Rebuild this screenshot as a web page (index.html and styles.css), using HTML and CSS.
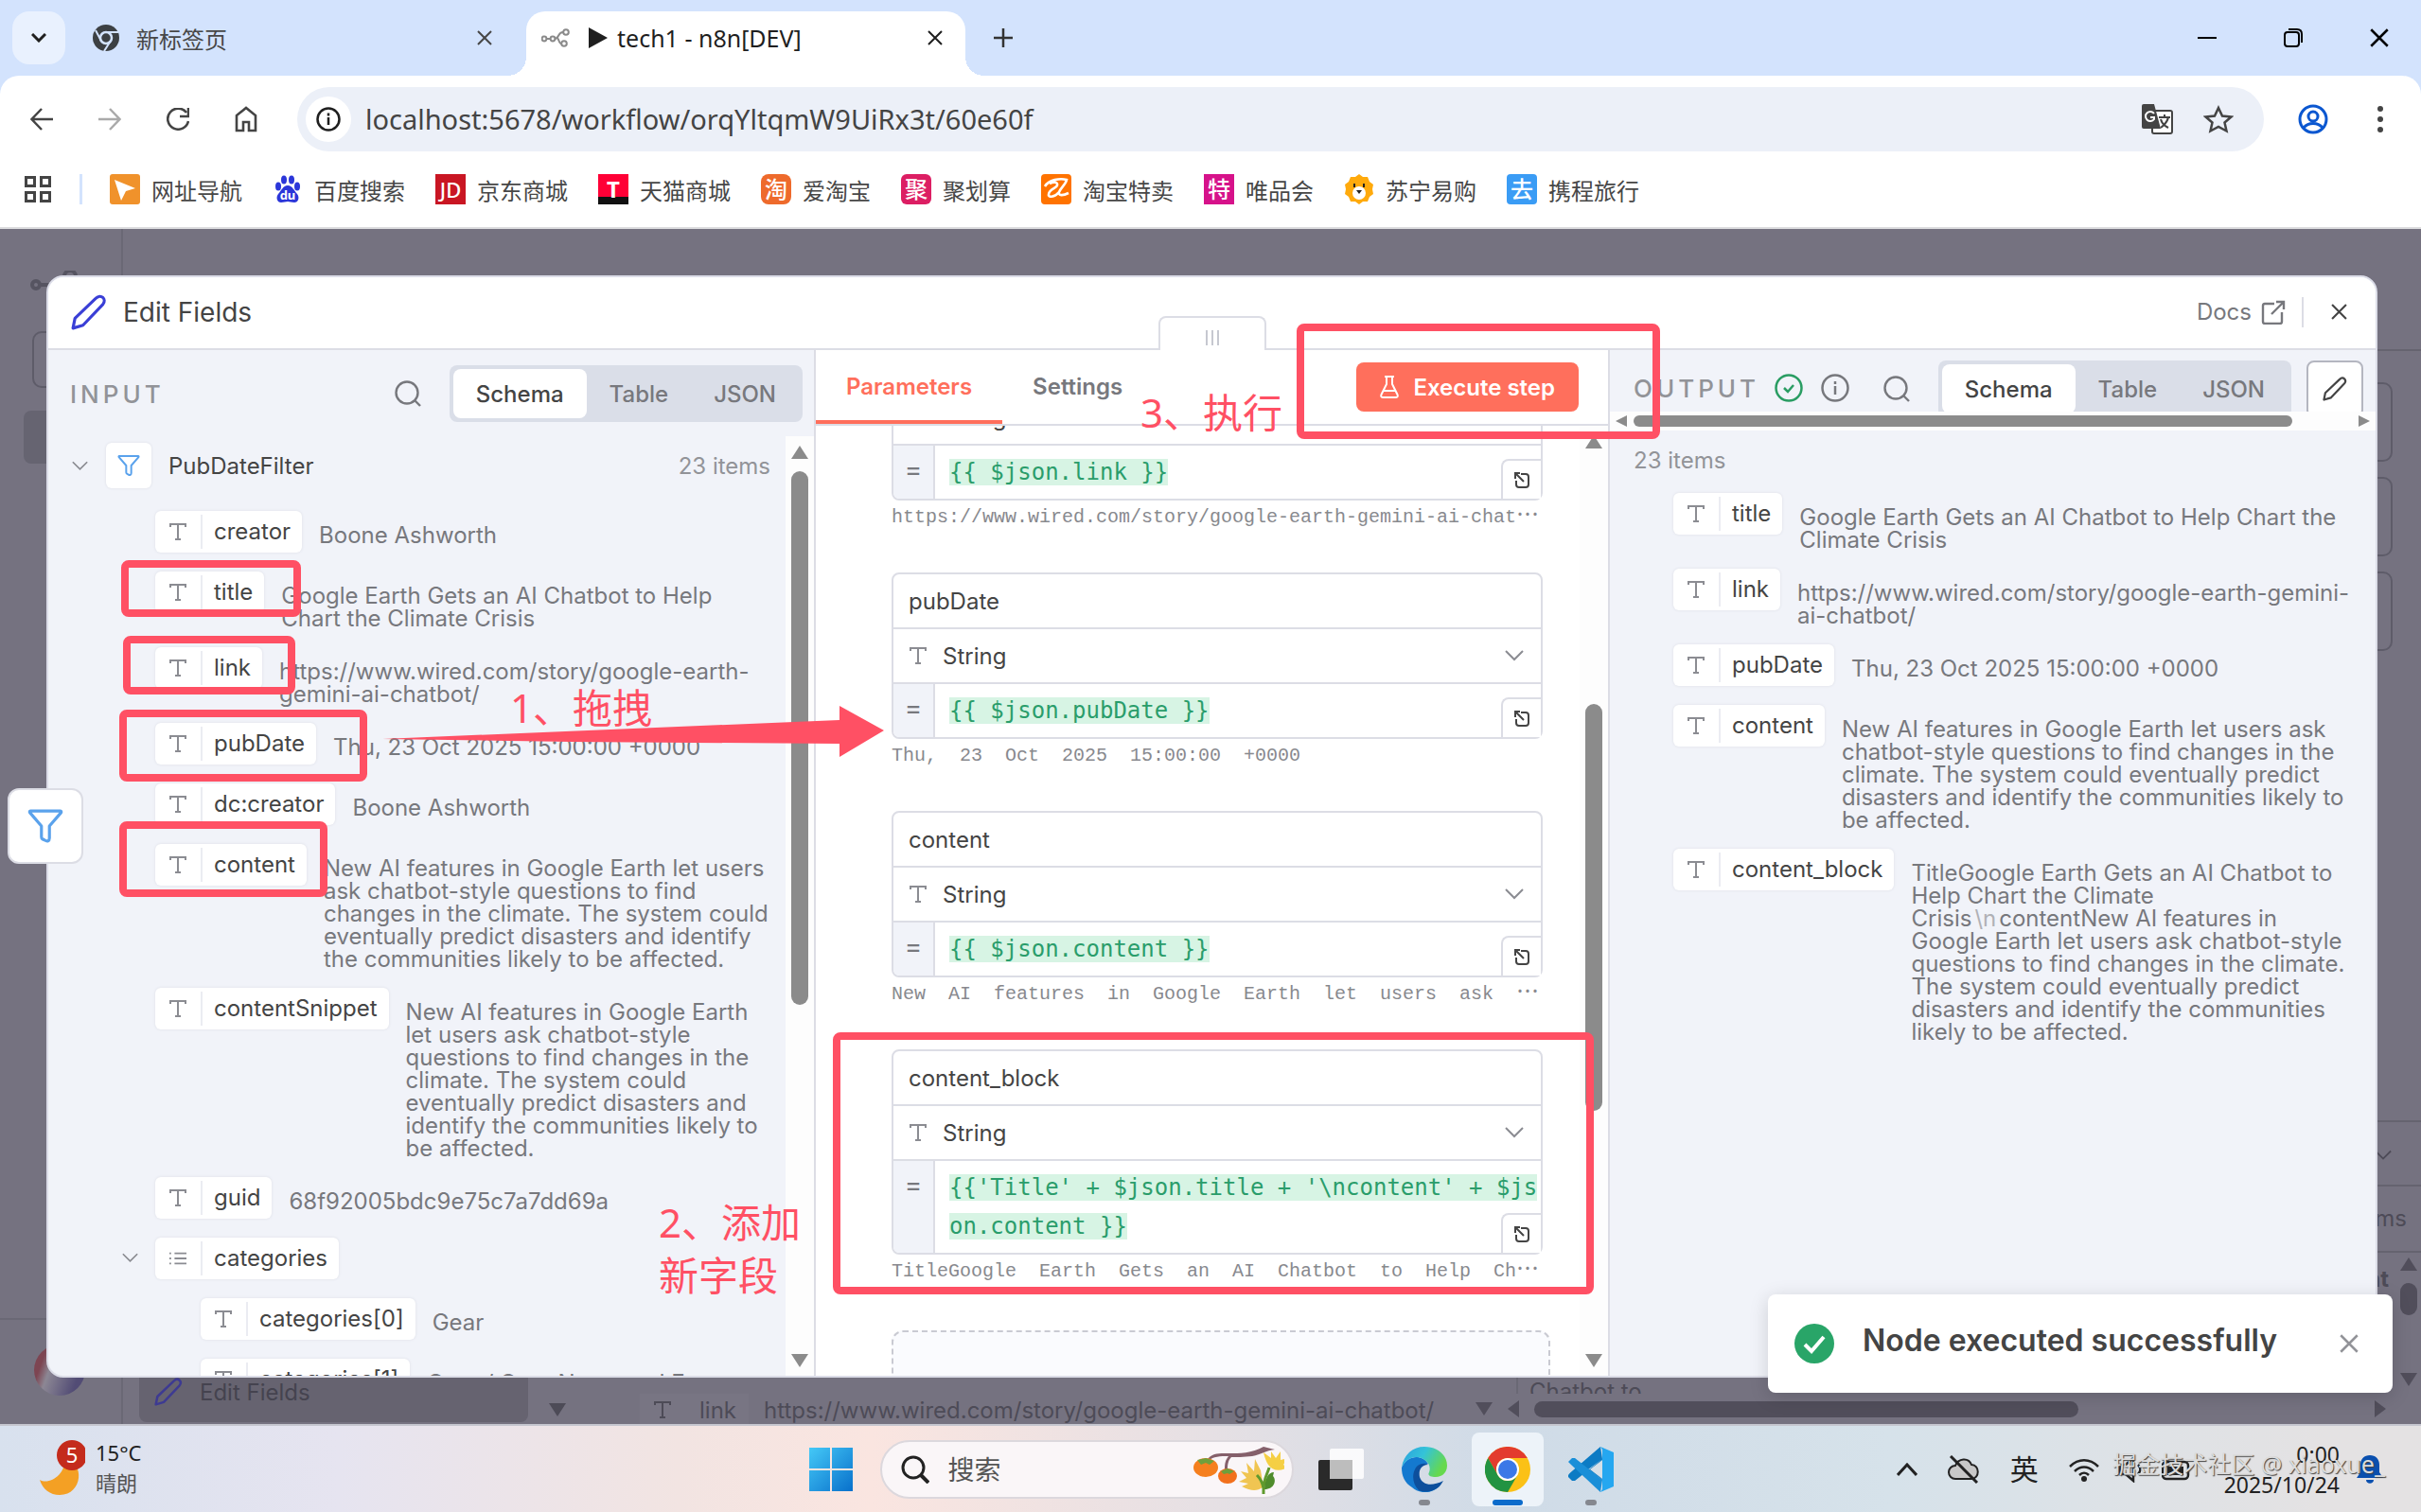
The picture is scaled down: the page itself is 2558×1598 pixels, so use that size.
FILE: index.html
```html
<!DOCTYPE html>
<html lang="zh-CN">
<head>
    <meta charset="UTF-8">
    <meta name="viewport" content="width=device-width, initial-scale=1.0">
    <title>tech1 - n8n[DEV]</title>
    <link rel="stylesheet" href="styles.css">
</head>
<body>
    <!-- shared icons -->
    <svg class="sprite" width="0" height="0" aria-hidden="true">
        <symbol id="i-x" viewBox="0 0 16 16"><path d="M1 1l14 14M15 1L1 15" fill="none" stroke="currentColor" stroke-width="2"/></symbol>
        <symbol id="i-down" viewBox="0 0 20 12"><path d="M1 1l9 9 9-9" fill="none" stroke="currentColor" stroke-width="2"/></symbol>
        <symbol id="i-chevron" viewBox="0 0 16 10"><path d="M1 1l7 7 7-7" fill="none" stroke="currentColor" stroke-width="3"/></symbol>
        <symbol id="i-type" viewBox="0 0 18 18"><path d="M1 4V1h16v3M9 1v16M6 17h6" fill="none" stroke="currentColor" stroke-width="2"/></symbol>
        <symbol id="i-list" viewBox="0 0 20 16"><path d="M6 2h14M6 8h14M6 14h14M0 2h2M0 8h2M0 14h2" fill="none" stroke="currentColor" stroke-width="2"/></symbol>
        <symbol id="i-search" viewBox="0 0 28 28"><circle cx="13" cy="13" r="11.5" fill="none" stroke="currentColor" stroke-width="2.4"/><path d="M21 21l6 6" stroke="currentColor" stroke-width="2.4"/></symbol>
        <symbol id="i-filter" viewBox="0 0 36 36"><path d="M3 3h30c1 0 1 1 .6 1.600L22 18v12c0 3-2 4-5 2l-2-1c-1-.5-1-1-1-2V18L2.500 4.600C2 4 2 3 3 3z" fill="none" stroke="currentColor" stroke-width="3" stroke-linejoin="round"/></symbol>
        <symbol id="i-pencil" viewBox="0 0 36 36"><path d="M2 34l2-10L25 4c5-5 11 1 7 6L12 31z" fill="none" stroke="currentColor" stroke-width="3" stroke-linejoin="round"/></symbol>
        <symbol id="i-open" viewBox="0 0 18 18"><path d="M8 3h5c2 0 3 1 3 3v8c0 2-1 3-3 3H6c-2 0-3-1-3-3v-4M2 8V2h5M2 2l9 9" fill="none" stroke="currentColor" stroke-width="2"/></symbol>
        <symbol id="i-external" viewBox="0 0 26 26"><path d="M14 4H4C2.500 4 2 5 2 6v17c0 1 1 2 2 2h16c1 0 2-1 2-2V13M16 2h8v8M24 2L11 15" fill="none" stroke="currentColor" stroke-width="2.400"/></symbol>
        <symbol id="i-chrome" viewBox="0 0 48 48"><circle cx="24" cy="24" r="24" fill="#fbc116"/><path d="M3.200 12A24 24 0 0 1 44.800 12H24a12 12 0 0 0-10.400 18z" fill="#e33b2e"/><path d="M3.200 12A24 24 0 0 0 24 48l10.400-18a12 12 0 0 1-20.800 0z" fill="#229342"/><circle cx="24" cy="24" r="12" fill="#fff"/><circle cx="24" cy="24" r="10" fill="#3b78e7"/></symbol>
    </svg>

    <!-- browser -->
    <header class="browser">
        <div class="tab-strip">
            <button class="tab-search" aria-label="Search tabs"><svg width="16" height="10"><use href="#i-chevron"/></svg></button>
            <div class="tab">
                <svg width="28" height="28" viewBox="0 0 28 28"><circle cx="14" cy="14" r="14" fill="#3c4043"/><circle cx="14" cy="14" r="6" fill="none" stroke="#d3e3fd" stroke-width="2.500"/><path d="M14 8h13M8.800 17L3 6M19 17l-7 11" stroke="#d3e3fd" stroke-width="2"/></svg>
                <span>新标签页</span>
                <button class="tab-close" aria-label="Close tab"><svg width="16" height="16"><use href="#i-x"/></svg></button>
            </div>
            <div class="tab tab-active">
                <svg width="30" height="20" viewBox="0 0 30 20"><g fill="none" stroke="#8a8a8a" stroke-width="2"><circle cx="3" cy="11" r="2.400"/><circle cx="12" cy="11" r="2.400"/><circle cx="26" cy="4" r="2.800"/><circle cx="24" cy="16" r="2.800"/><path d="M5 11h4M14 11c5 0 3-7 9-7M16 10c3 0 2 6 5 6"/></g></svg>
                <span class="tab-title"><svg width="20" height="22" viewBox="0 0 20 22"><path d="M0 0l20 11L0 22z" fill="#1f1f1f"/></svg>tech1 - n8n[DEV]</span>
                <button class="tab-close" aria-label="Close tab"><svg width="16" height="16"><use href="#i-x"/></svg></button>
            </div>
            <button class="tab-new" aria-label="New tab"><svg width="20" height="20" viewBox="0 0 20 20"><path d="M10 0v20M0 10h20" stroke="#333" stroke-width="2.500"/></svg></button>
            <div class="window-buttons">
                <button aria-label="Minimize"><svg width="20" height="20" viewBox="0 0 20 20"><path d="M0 10h20" stroke="#000" stroke-width="2"/></svg></button>
                <button aria-label="Restore"><svg width="20" height="20" viewBox="0 0 20 20"><g fill="none" stroke="#000" stroke-width="2"><rect x="1" y="4" width="15" height="15" rx="3"/><path d="M5 1h9c3 0 5 2 5 5v9"/></g></svg></button>
                <button aria-label="Close"><svg width="20" height="20"><use href="#i-x"/></svg></button>
            </div>
        </div>

        <div class="toolbar">
            <button aria-label="Back"><svg width="24" height="24" viewBox="0 0 24 24"><path d="M24 12H2M12 1L1.500 12 12 23" fill="none" stroke="#444" stroke-width="2.500"/></svg></button>
            <button aria-label="Forward"><svg width="24" height="24" viewBox="0 0 24 24"><path d="M0 12h22M12 1l10.500 11L12 23" fill="none" stroke="#aaa" stroke-width="2.500"/></svg></button>
            <button aria-label="Reload"><svg width="24" height="24" viewBox="0 0 24 24"><path d="M21 5a11 11 0 1 0 2 9M23 0v9h-9" fill="none" stroke="#444" stroke-width="2.600"/></svg></button>
            <button aria-label="Home"><svg width="24" height="28" viewBox="0 0 24 28"><path d="M2 26V10l10-8 10 8v16h-7v-9H9v9z" fill="none" stroke="#444" stroke-width="2.600"/></svg></button>
            <div class="omnibox">
                <button class="site-info" aria-label="Site information"><svg width="26" height="26" viewBox="0 0 26 26"><circle cx="13" cy="13" r="11.500" fill="none" stroke="#1f1f1f" stroke-width="2.500"/><path d="M13 11v8M13 6.500v3" stroke="#1f1f1f" stroke-width="2.500"/></svg></button>
                <input class="url" type="text" aria-label="Address" value="localhost:5678/workflow/orqYltqmW9UiRx3t/60e60f">
                <button aria-label="Translate"><svg width="34" height="34" viewBox="0 0 34 34"><rect x="12" y="8" width="21" height="24" rx="2" fill="#fff" stroke="#444" stroke-width="2"/><path d="M3 1h11l7 26H3a2 2 0 0 1-2-2V3a2 2 0 0 1 2-2z" fill="#444"/><path d="M14 11a5 5 0 1 0 0 6v-2h-4" fill="none" stroke="#fff" stroke-width="2"/><path d="M19 15h12M25 12v3M29 15c-1 5-4 8-8 11M21 17c1 4 4 7 8 9" fill="none" stroke="#444" stroke-width="2"/></svg></button>
                <button aria-label="Bookmark"><svg width="32" height="30" viewBox="0 0 32 30"><path d="M16 3l4 8.500 9.500 1-7 6 2 9L16 23l-8.500 4.500 2-9-7-6 9.500-1z" fill="none" stroke="#444" stroke-width="2.500"/></svg></button>
            </div>
            <button class="profile" aria-label="Profile"><svg width="32" height="32" viewBox="0 0 32 32"><g fill="none" stroke="#0b57d0" stroke-width="3"><circle cx="16" cy="16" r="14"/><circle cx="16" cy="13" r="5"/><path d="M6 25c5-6 15-6 20 0"/></g></svg></button>
            <button aria-label="Menu"><svg width="6" height="28" viewBox="0 0 6 28"><circle cx="3" cy="3" r="3" fill="#444"/><circle cx="3" cy="14" r="3" fill="#444"/><circle cx="3" cy="25" r="3" fill="#444"/></svg></button>
        </div>

        <nav class="bookmarks">
            <button class="apps" aria-label="Apps"><svg width="28" height="28" viewBox="0 0 28 28"><g fill="none" stroke="#444" stroke-width="3"><rect x="1.500" y="1.500" width="9" height="9"/><rect x="17.500" y="1.500" width="9" height="9"/><rect x="1.500" y="17.500" width="9" height="9"/><rect x="17.500" y="17.500" width="9" height="9"/></g></svg></button>
            <a href="#"><svg width="32" height="32" viewBox="0 0 32 32"><rect width="32" height="32" rx="3" fill="#f0922b"/><path d="M5 6l22 9-10 3-5 10z" fill="#fff"/></svg>网址导航</a>
            <a href="#"><svg width="32" height="32" viewBox="0 0 32 32"><g fill="#2b36d9"><ellipse cx="6" cy="13" rx="3" ry="4.500"/><ellipse cx="12" cy="6" rx="3" ry="4.500"/><ellipse cx="20" cy="6" rx="3" ry="4.500"/><ellipse cx="26" cy="13" rx="3" ry="4.500"/><path d="M16 12c5 0 7 6 10 9 3 4 1 9-3 9-3 0-5-1-7-1s-4 1-7 1c-4 0-6-5-3-9 3-3 5-9 10-9z"/></g><text x="16" y="27" class="logo-du" text-anchor="middle">du</text></svg>百度搜索</a>
            <a href="#"><span class="logo logo-jd">JD</span>京东商城</a>
            <a href="#"><span class="logo logo-tmall">T</span>天猫商城</a>
            <a href="#"><span class="logo logo-tao">淘</span>爱淘宝</a>
            <a href="#"><span class="logo logo-ju">聚</span>聚划算</a>
            <a href="#"><svg width="32" height="32" viewBox="0 0 32 32"><rect width="32" height="32" rx="4" fill="#ff7300"/><path d="M4 13C8 6 20 4 27 6c-1 5-6 8-8 13-1 4 4 4 10 1M9 10c4-2 9-2 8 2-1 3-8 4-9 9-1 4 6 4 11-2" fill="none" stroke="#fff" stroke-width="2.600"/></svg>淘宝特卖</a>
            <a href="#"><span class="logo logo-vip">特</span>唯品会</a>
            <a href="#"><svg width="32" height="32" viewBox="0 0 32 32"><path d="M16 0l4 3 5 0 2 5 4 3-1 5 1 5-4 3-2 5h-5l-4 3-4-3H7l-2-5-4-3 1-5-1-5 4-3 2-5h5z" fill="#ffaa0c"/><circle cx="16" cy="20" r="7" fill="#fff"/><path d="M13 17h6l-3 4zM10 10h2v4h-2zM20 10h2v4h-2z" fill="#222"/></svg>苏宁易购</a>
            <a href="#"><span class="logo logo-ctrip">去</span>携程旅行</a>
        </nav>
    </header>

    <main class="page">
        <!-- dimmed workflow editor behind the dialog -->
        <div class="backdrop" aria-hidden="true">
            <div class="bd-sidebar"></div>
            <svg class="bd-logo" width="50" height="26" viewBox="0 0 50 26"><g fill="none" stroke="#565461" stroke-width="4"><circle cx="6" cy="15" r="4"/><path d="M10 15h10M36 6a6 6 0 0 1 12 0"/></g></svg>
            <div class="bd-box"></div>
            <div class="bd-block"></div>
            <div class="bd-user"></div>
            <div class="bd-avatar"></div>
            <div class="bd-node"><svg width="30" height="30"><use href="#i-pencil"/></svg>Edit Fields</div>
            <div class="bd-row">
                <span class="bd-tri"></span>
                <span class="bd-pill"><svg width="18" height="18"><use href="#i-type"/></svg>link</span>
                <span>https://www.wired.com/story/google-earth-gemini-ai-chatbot/</span>
            </div>
            <div class="bd-cell">Chatbot to</div>
            <div class="bd-scroll"><i class="tri tri-down"></i><i class="tri tri-left"></i><b></b><i class="tri tri-right"></i></div>
            <div class="bd-right">
                <div class="bd-card"></div><div class="bd-card"></div><div class="bd-card"></div>
            </div>
            <div class="bd-logs"><div class="bd-log-head"><svg width="18" height="12"><use href="#i-down"/></svg></div><div class="bd-items">ms</div><div class="bd-head">nt</div></div>
            <div class="bd-vscroll"><i class="tri tri-up"></i><b></b><i class="tri tri-down"></i></div>
        </div>

        <section class="dialog">
            <div class="dialog-header">
                <svg class="node-icon" width="38" height="38"><use href="#i-pencil"/></svg>
                <h1>Edit Fields</h1>
                <a class="docs" href="#">Docs <svg width="26" height="26"><use href="#i-external"/></svg></a>
                <button class="dialog-close" aria-label="Close"><svg width="17" height="17"><use href="#i-x"/></svg></button>
                <div class="drag-handle"><i></i><i></i><i></i></div>
            </div>

            <div class="panels">
                <div class="panel panel-input">
                    <div class="panel-head">
                        <h2>INPUT</h2>
                        <button class="icon-button" aria-label="Search"><svg width="28" height="28"><use href="#i-search"/></svg></button>
                        <div class="switch"><button class="on">Schema</button><button>Table</button><button>JSON</button></div>
                    </div>
                    <div class="panel-scroll">
                        <div class="schema">
                            <div class="schema-node">
                                <svg class="arrow" width="17" height="11"><use href="#i-down"/></svg>
                                <span class="node-box"><svg width="24" height="24"><use href="#i-filter"/></svg></span>
                                <span>PubDateFilter</span>
                                <span class="count">23 items</span>
                            </div>
                            <div class="field"><span class="pill"><svg width="18" height="18"><use href="#i-type"/></svg><span>creator</span></span><span class="value">Boone Ashworth</span></div>
                            <div class="field"><span class="pill"><svg width="18" height="18"><use href="#i-type"/></svg><span>title</span></span><span class="value">Google Earth Gets an AI Chatbot to Help Chart the Climate Crisis</span></div>
                            <div class="field"><span class="pill"><svg width="18" height="18"><use href="#i-type"/></svg><span>link</span></span><span class="value">https://www.wired.com/story/google-earth-gemini-ai-chatbot/</span></div>
                            <div class="field"><span class="pill"><svg width="18" height="18"><use href="#i-type"/></svg><span>pubDate</span></span><span class="value">Thu, 23 Oct 2025 15:00:00 +0000</span></div>
                            <div class="field"><span class="pill"><svg width="18" height="18"><use href="#i-type"/></svg><span>dc:creator</span></span><span class="value">Boone Ashworth</span></div>
                            <div class="field"><span class="pill"><svg width="18" height="18"><use href="#i-type"/></svg><span>content</span></span><span class="value">New AI features in Google Earth let users ask chatbot-style questions to find changes in the climate. The system could eventually predict disasters and identify the communities likely to be affected.</span></div>
                            <div class="field"><span class="pill"><svg width="18" height="18"><use href="#i-type"/></svg><span>contentSnippet</span></span><span class="value">New AI features in Google Earth let users ask chatbot-style questions to find changes in the climate. The system could eventually predict disasters and identify the communities likely to be affected.</span></div>
                            <div class="field"><span class="pill"><svg width="18" height="18"><use href="#i-type"/></svg><span>guid</span></span><span class="value">68f92005bdc9e75c7a7dd69a</span></div>
                            <div class="field field-parent"><svg class="arrow" width="17" height="11"><use href="#i-down"/></svg><span class="pill"><svg width="18" height="16"><use href="#i-list"/></svg><span>categories</span></span></div>
                            <div class="field field-child"><span class="pill"><svg width="18" height="18"><use href="#i-type"/></svg><span>categories[0]</span></span><span class="value">Gear</span></div>
                            <div class="field field-child"><span class="pill"><svg width="18" height="18"><use href="#i-type"/></svg><span>categories[1]</span></span><span class="value">Gear / Gear News and Events</span></div>
                        </div>
                        <div class="scrollbar scrollbar-input"><i class="tri tri-up"></i><b></b><i class="tri tri-down"></i></div>
                    </div>
                </div>

                <div class="panel panel-params">
                    <div class="param-tabs">
                        <button class="on">Parameters</button>
                        <button>Settings</button>
                        <button class="execute"><svg width="20" height="24" viewBox="0 0 20 24"><path d="M5 1h10M7 1v8L1.500 20c-.8 2 0 3 2 3h13c2 0 2.800-1 2-3L13 9V1M4 16h12" fill="none" stroke="#fff" stroke-width="2"/></svg>Execute step</button>
                    </div>
                    <div class="panel-scroll">
                        <div class="params">
                            <div class="param">
                                <div class="param-box">
                                    <input type="text" aria-label="Name" value="link">
                                    <div class="param-type"><svg width="18" height="18"><use href="#i-type"/></svg><select aria-label="Type"><option>String</option></select><svg width="20" height="12"><use href="#i-down"/></svg></div>
                                    <div class="expression"><span class="eq">=</span><code><mark>{{ $json.link }}</mark></code><button class="expand" aria-label="Open editor"><svg width="18" height="20"><use href="#i-open"/></svg></button></div>
                                </div>
                                <div class="result">https://www.wired.com/story/google-earth-gemini-ai-chat<em>…</em></div>
                            </div>
                            <div class="param">
                                <div class="param-box">
                                    <input type="text" aria-label="Name" value="pubDate">
                                    <div class="param-type"><svg width="18" height="18"><use href="#i-type"/></svg><select aria-label="Type"><option>String</option></select><svg width="20" height="12"><use href="#i-down"/></svg></div>
                                    <div class="expression"><span class="eq">=</span><code><mark>{{ $json.pubDate }}</mark></code><button class="expand" aria-label="Open editor"><svg width="18" height="20"><use href="#i-open"/></svg></button></div>
                                </div>
                                <div class="result">Thu,  23  Oct  2025  15:00:00  +0000</div>
                            </div>
                            <div class="param">
                                <div class="param-box">
                                    <input type="text" aria-label="Name" value="content">
                                    <div class="param-type"><svg width="18" height="18"><use href="#i-type"/></svg><select aria-label="Type"><option>String</option></select><svg width="20" height="12"><use href="#i-down"/></svg></div>
                                    <div class="expression"><span class="eq">=</span><code><mark>{{ $json.content }}</mark></code><button class="expand" aria-label="Open editor"><svg width="18" height="20"><use href="#i-open"/></svg></button></div>
                                </div>
                                <div class="result">New  AI  features  in  Google  Earth  let  users  ask  <em>…</em></div>
                            </div>
                            <div class="param">
                                <div class="param-box">
                                    <input type="text" aria-label="Name" value="content_block">
                                    <div class="param-type"><svg width="18" height="18"><use href="#i-type"/></svg><select aria-label="Type"><option>String</option></select><svg width="20" height="12"><use href="#i-down"/></svg></div>
                                    <div class="expression"><span class="eq">=</span><code><mark>{{'Title' + $json.title + '\ncontent' + $json.content }}</mark></code><button class="expand" aria-label="Open editor"><svg width="18" height="20"><use href="#i-open"/></svg></button></div>
                                </div>
                                <div class="result">TitleGoogle  Earth  Gets  an  AI  Chatbot  to  Help  Ch<em>…</em></div>
                            </div>
                            <div class="drop-area">Drag input fields here or <a href="#">Add Field</a></div>
                        </div>
                        <div class="scrollbar scrollbar-params"><i class="tri tri-up"></i><b></b><i class="tri tri-down"></i></div>
                    </div>
                </div>

                <div class="panel panel-output">
                    <div class="panel-head">
                        <h2>OUTPUT</h2>
                        <svg width="30" height="30" viewBox="0 0 30 30"><g fill="none" stroke="#2a9d63" stroke-width="2.500"><circle cx="15" cy="15" r="13.500"/><path d="M10 15l4 4 6-7"/></g></svg>
                        <svg width="30" height="30" viewBox="0 0 30 30"><g fill="none" stroke="#77787d" stroke-width="2.500"><circle cx="15" cy="15" r="13.500"/><path d="M15 13v9M15 8v3"/></g></svg>
                        <button class="icon-button" aria-label="Search"><svg width="28" height="28"><use href="#i-search"/></svg></button>
                        <div class="switch"><button class="on">Schema</button><button>Table</button><button>JSON</button></div>
                        <button class="edit-button" aria-label="Edit output"><svg width="26" height="26"><use href="#i-pencil"/></svg></button>
                    </div>
                    <div class="hscroll"><i class="tri tri-left"></i><b></b><i class="tri tri-right"></i></div>
                    <div class="output-count">23 items</div>
                    <div class="schema schema-output">
                        <div class="field"><span class="pill"><svg width="18" height="18"><use href="#i-type"/></svg><span>title</span></span><span class="value">Google Earth Gets an AI Chatbot to Help Chart the Climate Crisis</span></div>
                        <div class="field"><span class="pill"><svg width="18" height="18"><use href="#i-type"/></svg><span>link</span></span><span class="value">https://www.wired.com/story/google-earth-gemini-ai-chatbot/</span></div>
                        <div class="field"><span class="pill"><svg width="18" height="18"><use href="#i-type"/></svg><span>pubDate</span></span><span class="value">Thu, 23 Oct 2025 15:00:00 +0000</span></div>
                        <div class="field"><span class="pill"><svg width="18" height="18"><use href="#i-type"/></svg><span>content</span></span><span class="value">New AI features in Google Earth let users ask chatbot-style questions to find changes in the climate. The system could eventually predict disasters and identify the communities likely to be affected.</span></div>
                        <div class="field"><span class="pill"><svg width="18" height="18"><use href="#i-type"/></svg><span>content_block</span></span><span class="value">TitleGoogle Earth Gets an AI Chatbot to Help Chart the Climate Crisis<span class="newline">\n</span>contentNew AI features in Google Earth let users ask chatbot-style questions to find changes in the climate. The system could eventually predict disasters and identify the communities likely to be affected.</span></div>
                    </div>
                </div>
            </div>
        </section>

        <button class="float-node" aria-label="PubDateFilter"><svg width="38" height="38"><use href="#i-filter"/></svg></button>

        <div class="toast" role="alert">
            <svg width="42" height="42" viewBox="0 0 42 42"><circle cx="21" cy="21" r="21" fill="#29a568"/><path d="M11 22l7 7 13-15" fill="none" stroke="#fff" stroke-width="4"/></svg>
            <strong>Node executed successfully</strong>
            <button aria-label="Close"><svg width="20" height="20"><use href="#i-x"/></svg></button>
        </div>
    </main>

    <footer class="taskbar">
        <div class="weather">
            <svg width="48" height="60" viewBox="0 0 48 60"><path d="M0 43c10 6 28-6 26-22 22 2 20 38-5 38-10 0-18-6-21-16z" fill="#f4a024"/><circle cx="34" cy="17" r="16" fill="#c42b1c"/><text x="34" y="25" class="badge-text" text-anchor="middle">5</text></svg>
            <div>15°C<br><span>晴朗</span></div>
        </div>
        <div class="task-center">
            <button aria-label="Start"><svg width="46" height="46" viewBox="0 0 46 46"><defs><linearGradient id="win" x1="0" y1="0" x2="1" y2="1"><stop offset="0" stop-color="#45c9f7"/><stop offset="1" stop-color="#0870cb"/></linearGradient></defs><path d="M0 0h22v22H0zM24 0h22v22H24zM0 24h22v22H0zM24 24h22v22H24z" fill="url(#win)"/></svg></button>
            <label class="task-search">
                <svg width="30" height="30" viewBox="0 0 30 30"><circle cx="13" cy="13" r="11" fill="none" stroke="#222" stroke-width="3"/><path d="M21 21l8 8" stroke="#222" stroke-width="4"/></svg>
                <input type="text" aria-label="搜索" placeholder="搜索">
                <svg width="96" height="54" viewBox="0 0 96 54"><path d="M14 17C20 9 28 10 38 10s24 0 36-7l12 3c-10 1-14 5-24 7-8 1-18 1-22 1-3 3-4 7-4 13h-3c0-7 1-10 4-14-9 0-16 0-21 5z" fill="#85606b"/><ellipse cx="13" cy="25" rx="13" ry="10" fill="#f57f1e"/><ellipse cx="36" cy="34" rx="10" ry="8" fill="#f2701c"/><path d="M4 17l9-2 9 3-5 4-4-2-5 2zM29 29l7-3 7 3-5 3-2-1-4 1z" fill="#6f9f3c"/><path d="M48 40l8-4-6-7 8 2-2-11 8 9 1-13 6 12 2 12c4-4 6-2 10 0-6 2-8 4-10 6-6 4-12 4-22-1l7-3z" fill="#f0c552"/><path d="M74 9l8 6V8l5 7 5-7v9l8-2-5 7 4 3c-8 5-16 3-20-3-2-3-4-8-5-13z" fill="#f5cf45"/><path d="M80 25c-2 8-7 12-6 28M67 33c4 4 6 8 7 14" fill="none" stroke="#5f9a2e" stroke-width="3"/><path d="M75 48c1-12 4-18 10-18l-1 4c4 4 2 14-9 14z" fill="#4f8c2c"/></svg>
            </label>
            <button class="app" aria-label="Task view"><svg width="48" height="46" viewBox="0 0 48 46"><rect x="0" y="13" width="36" height="32" rx="2" fill="#2a2a2a"/><rect x="12" y="1" width="36" height="32" rx="2" fill="#fff" opacity=".85"/><path d="M12 13h24v20H12z" fill="#bdbdbd"/></svg></button>
            <button class="app running" aria-label="Edge"><svg width="48" height="48" viewBox="0 0 48 48"><defs><linearGradient id="edge" x1="0" y1="0" x2="1" y2=".4"><stop offset="0" stop-color="#2a9fe0"/><stop offset=".5" stop-color="#34c3d8"/><stop offset="1" stop-color="#66d94e"/></linearGradient></defs><path d="M0 22C6 8 22 8 28 18c-9 0-12 7-10 14 3 9 14 14 24 7-8 12-24 11-31 4C3 38 0 31 0 22z" fill="#1479cf"/><path d="M15 22c4-5 10-5 13-3-9 0-10 8-9 13 3 9 13 10 25 4-5 10-16 14-26 10-6-6-8-16-3-24z" fill="#0d4f9c"/><path d="M0 22C2 8 12 0 24 0c14 0 24 9 24 20 0 8-6 12-12 12-6 0-9-2-7-5 3-8-4-16-14-16C8 11 3 16 0 22z" fill="url(#edge)"/></svg></button>
            <button class="app running current" aria-label="Chrome"><svg width="48" height="48"><use href="#i-chrome"/></svg></button>
            <button class="app running" aria-label="Visual Studio Code"><svg width="48" height="48" viewBox="0 0 48 48"><path d="M36 13v22L21 24zM34 0L5 25c-2 2-4 3-5 5v2l4 4h3l29-23z" fill="#0c7bc4"/><path d="M0 16l4-4h3l29 23-2 13L3 19z" fill="#1a8fd8"/><path d="M34 0l14 6v36l-14 6 2-3V3z" fill="#25a7f0"/><path d="M36 14v20L23 24z" fill="#d6e0e8"/></svg></button>
        </div>
        <div class="tray">
            <svg width="22" height="14" viewBox="0 0 22 14"><path d="M1 13L11 2l10 11" fill="none" stroke="#222" stroke-width="3"/></svg>
            <svg width="34" height="30" viewBox="0 0 34 30"><path d="M8 25a7 7 0 0 1 0-14C11 3 22 2 25 10c9 0 9 15 0 15z" fill="#c8c8c8" stroke="#222" stroke-width="2"/><path d="M3 1l28 28" stroke="#222" stroke-width="3"/></svg>
            <span class="ime">英</span>
            <svg width="32" height="26" viewBox="0 0 32 26"><g fill="none" stroke="#222" stroke-width="2.500"><path d="M1 10c9-9 21-9 30 0M6 15c6-6 14-6 20 0M11 19c3-3 7-3 10 0"/></g><circle cx="16" cy="23" r="3" fill="#222"/></svg>
            <svg width="32" height="28" viewBox="0 0 32 28"><path d="M2 9h6l8-7v24l-8-7H2zM21 9c3 3 3 7 0 10" fill="none" stroke="#222" stroke-width="2.500"/></svg>
            <svg width="32" height="26" viewBox="0 0 32 26"><rect x="1" y="5" width="27" height="18" rx="4" fill="none" stroke="#222" stroke-width="2.500"/><path d="M6 10h17v9H6z" fill="#222"/></svg>
            <time>0:00<br>2025/10/24</time>
            <svg width="28" height="32" viewBox="0 0 28 32"><path d="M14 1c6 0 10 4 10 10v8l4 6H0l4-6v-8C4 5 8 1 14 1zM10 27h8c0 5-8 5-8 0z" fill="#0a4fae"/></svg>
            <span class="watermark">掘金技术社区 @ xiaoxue_</span>
        </div>
    </footer>

    <!-- tutorial marks drawn over the window -->
    <div class="marks">
        <div class="mark mark-title"></div>
        <div class="mark mark-link"></div>
        <div class="mark mark-date"></div>
        <div class="mark mark-content"></div>
        <div class="mark mark-block"></div>
        <div class="mark mark-execute"></div>
        <svg class="mark-arrow" width="530" height="56" viewBox="0 0 530 56"><path d="M0 35L483 15V0l47 26-47 28V40L200 38z" fill="#ff5064"/></svg>
        <p class="note note-1">1、拖拽</p>
        <p class="note note-2">2、添加<br>新字段</p>
        <p class="note note-3">3、执行</p>
    </div>
</body>
</html>
```
FILE: styles.css
```css
* {
    box-sizing: border-box;
}

body {
    margin: 0;
    height: 100vh;
    display: flex;
    flex-direction: column;
    position: relative;
    overflow: hidden;
    font-family: Inter, "Noto Sans CJK SC", sans-serif;
    font-size: 24px;
    color: #444;
}

button, input, select {
    font: inherit;
    color: inherit;
    border: none;
    background: none;
    padding: 0;
    margin: 0;
}

button {
    display: flex;
    align-items: center;
    justify-content: center;
}

input, select {
    outline: none;
    appearance: none;
    min-width: 0;
}

a {
    color: inherit;
    text-decoration: none;
}

svg {
    flex: none;
}

h1, h2, p {
    margin: 0;
    font-weight: 400;
}

.sprite {
    position: absolute;
}

/* browser */
.browser {
    flex: none;
    font-family: "Noto Sans", "Noto Sans CJK SC", sans-serif;
    background: #d3e3fd;
    border-bottom: 2px solid #dcdcde;
}

.tab-strip {
    height: 80px;
    display: flex;
    padding: 12px 34px 0 13px;
}

.tab-search {
    width: 56px;
    height: 56px;
    border-radius: 18px;
    background: #e9f1fe;
    color: #1f1f1f;
    margin-right: 11px;
}

.tab {
    flex: 0 1 476px;
    display: flex;
    align-items: center;
    gap: 18px;
    padding: 0 36px 12px 18px;
    color: #474747;
}

.tab-active {
    position: relative;
    flex-basis: 464px;
    gap: 20px;
    padding: 0 24px 12px 16px;
    background: #fff;
    border-radius: 20px 20px 0 0;
    color: #1f1f1f;
}

.tab-active::before,
.tab-active::after {
    content: "";
    position: absolute;
    bottom: 0;
    width: 20px;
    height: 20px;
}

.tab-active::before {
    right: 100%;
    background: radial-gradient(circle at 0 0, transparent 20px, #fff 20px);
}

.tab-active::after {
    left: 100%;
    background: radial-gradient(circle at 100% 0, transparent 20px, #fff 20px);
}

.tab-title {
    display: flex;
    align-items: center;
    gap: 10px;
    font-size: 25px;
}

.tab-close {
    margin-left: auto;
}

.tab-new {
    margin-left: 30px;
    padding-bottom: 12px;
}

.window-buttons {
    margin-left: auto;
    display: flex;
    gap: 71px;
    padding-bottom: 12px;
    color: #000;
}

.toolbar {
    display: flex;
    align-items: center;
    gap: 48px;
    height: 80px;
    padding: 12px 40px 0 32px;
    background: #fff;
    border-radius: 20px 20px 0 0;
}

.omnibox {
    flex: 1;
    height: 68px;
    display: flex;
    align-items: center;
    gap: 32px;
    margin: 0 -12px 0 -6px;
    padding: 0 32px 0 9px;
    border-radius: 34px;
    background: #ecf0f8;
}

.site-info {
    width: 48px;
    height: 48px;
    border-radius: 50%;
    background: #fff;
}

.url {
    flex: 1;
    margin-left: -17px;
    padding-bottom: 2px;
    font-size: 29px;
}

.profile {
    margin-right: 4px;
}

.bookmarks {
    display: flex;
    align-items: center;
    gap: 32px;
    height: 80px;
    padding: 0 26px;
    background: #fff;
    color: #474747;
}

.bookmarks a {
    display: flex;
    align-items: center;
    gap: 12px;
}

.apps {
    height: 32px;
    padding-right: 30px;
    border-right: 3px solid #d3e3fd;
    margin-right: -3px;
}

.logo {
    width: 32px;
    height: 32px;
    display: flex;
    align-items: center;
    justify-content: center;
    color: #fff;
    font-size: 24px;
    font-weight: 500;
    line-height: 32px;
}

.logo-jd { background: #c91623; font-size: 22px; }
.logo-tmall { background: linear-gradient(#ff0036 75%, #111 75%); font-weight: 700; }
.logo-tao { background: #ee6a2c; border-radius: 8px; }
.logo-ju { background: #dc1e63; border-radius: 6px; }
.logo-vip { background: #d6128a; }
.logo-ctrip { background: #3a9cf5; border-radius: 4px; }

.logo-du {
    font-size: 13px;
    font-weight: 700;
    fill: #fff;
}

/* workflow page */
.page {
    flex: 1;
    min-height: 0;
    position: relative;
    display: flex;
    padding: 49px 46px 49px 49px;
    background: #757280;
}

.backdrop {
    position: absolute;
    inset: 0;
    overflow: hidden;
    color: #4d4b57;
}

.backdrop > * {
    position: absolute;
}

.bd-sidebar {
    left: 0;
    top: 0;
    bottom: 0;
    width: 130px;
    border-right: 2px solid #6a6875;
}

.bd-logo { left: 32px; top: 44px; }

.bd-box {
    left: 34px;
    top: 108px;
    width: 60px;
    height: 60px;
    border: 2px solid #5e5c69;
    border-radius: 10px;
}

.bd-block {
    left: 25px;
    top: 192px;
    width: 80px;
    height: 56px;
    border-radius: 8px;
    background: #666471;
}

.bd-user {
    left: 0;
    bottom: 0;
    width: 129px;
    height: 112px;
    border-top: 2px solid #6a6875;
}

.bd-avatar {
    left: 36px;
    bottom: 30px;
    width: 54px;
    height: 54px;
    border-radius: 50%;
    background: linear-gradient(110deg, #7d4552 20%, #8c8794 35%, #524c75 80%);
}

.bd-node {
    left: 147px;
    bottom: 2px;
    width: 411px;
    height: 64px;
    display: flex;
    align-items: center;
    gap: 18px;
    padding-left: 16px;
    border-radius: 8px;
    background: #666370;
    color: #45434f;
}

.bd-node svg { color: #3d3a92; }

.bd-row {
    left: 580px;
    bottom: 0;
    height: 30px;
    display: flex;
    align-items: center;
    gap: 28px;
}

.bd-tri {
    border: 9px solid transparent;
    border-top: 14px solid #4d4b57;
    border-bottom: 0;
}

.bd-pill {
    display: flex;
    align-items: center;
    gap: 30px;
    height: 34px;
    padding: 0 13px 0 15px;
    margin: 0 -12px 0 50px;
    background: #787583;
}

.bd-cell {
    left: 1602px;
    bottom: 32px;
    height: 18px;
    padding-left: 12px;
    border-left: 2px solid #6a6875;
    line-height: 32px;
    overflow: hidden;
}

.bd-scroll {
    left: 1559px;
    right: 37px;
    bottom: 7px;
    height: 18px;
    display: flex;
    align-items: center;
    gap: 16px;
}

.bd-scroll b {
    flex: 0 0 575px;
    height: 17px;
    border-radius: 9px;
    background: #514e5b;
}

.bd-scroll .tri-right { margin-left: auto; }
.backdrop .tri { color: #514e5b; }

.bd-right {
    right: 0;
    top: 127px;
    width: 80px;
    display: grid;
    gap: 16px;
    padding: 33px 30px 0 0;
    border-top: 2px solid #65636f;
}

.bd-card {
    height: 84px;
    border: 2px solid #5e5c69;
    border-radius: 10px;
}

.bd-logs {
    right: 0;
    top: 942px;
    width: 90px;
    border-top: 2px solid #65636f;
    text-align: right;
}

.bd-log-head {
    height: 68px;
    padding: 18px 31px 0 0;
    border-bottom: 2px solid #65636f;
}

.bd-items {
    padding-right: 15px;
    line-height: 68px;
    border-bottom: 2px solid #65636f;
}

.bd-head {
    padding-right: 34px;
    line-height: 56px;
    font-weight: 700;
}

.bd-vscroll {
    right: 4px;
    top: 1087px;
    height: 136px;
    display: flex;
    flex-direction: column;
    gap: 13px;
}

.bd-vscroll b {
    height: 34px;
    border-radius: 9px;
    background: #514e5b;
}

.bd-vscroll .tri-down { margin-top: auto; }

/* dialog */
.dialog {
    position: relative;
    flex: 1;
    min-width: 0;
    display: flex;
    flex-direction: column;
    border: 2px solid #dcdde8;
    border-radius: 18px;
    background: #f1f3f9;
    overflow: hidden;
}

.dialog-header {
    flex: none;
    position: relative;
    display: flex;
    align-items: center;
    height: 77px;
    padding: 0 30px 2px 24px;
    border-bottom: 2px solid #dcdde5;
    background: #fff;
}

.node-icon {
    color: #3a3fd6;
}

.dialog-header h1 {
    margin-left: 17px;
    font-size: 28px;
}

.docs {
    display: flex;
    align-items: center;
    gap: 10px;
    margin-left: auto;
    padding-right: 17px;
    height: 32px;
    border-right: 2px solid #dcdde5;
    color: #77787d;
}

.dialog-close {
    margin-left: 29px;
}

.drag-handle {
    position: absolute;
    left: calc(50% - 57px);
    bottom: -2px;
    width: 114px;
    height: 36px;
    display: flex;
    justify-content: center;
    gap: 4px;
    padding-top: 13px;
    border: 2px solid #dcdde5;
    border-bottom: none;
    border-radius: 8px 8px 0 0;
    background: #fff;
}

.drag-handle i {
    width: 2px;
    height: 16px;
    background: #c6c8d0;
}

.panels {
    flex: 1;
    min-height: 0;
    display: grid;
    grid-template-columns: 811fr 839fr 809fr;
}

.panel {
    min-width: 0;
    min-height: 0;
    display: flex;
    flex-direction: column;
    overflow: hidden;
}

.panel-input, .panel-params {
    border-right: 2px solid #dcdde5;
}

.panel-params {
    background: #fff;
}

.panel-head {
    flex: none;
    display: flex;
    align-items: center;
    padding: 16px 12px 15px 23px;
}

.panel-head h2 {
    font-size: 26px;
    font-weight: 500;
    letter-spacing: 4px;
    color: #929398;
}

.icon-button {
    margin: 0 30px 0 auto;
    color: #77787d;
}

.switch {
    display: flex;
    height: 60px;
    padding: 4px;
    border-radius: 8px;
    background: #dadee8;
}

.switch button {
    padding: 0 24px;
    border-radius: 8px;
    color: #77787d;
    font-weight: 500;
}

.switch .on {
    background: #fff;
    color: #444;
}

.panel-scroll {
    flex: 1;
    min-height: 0;
    display: flex;
    overflow: hidden;
}

.schema {
    flex: 1;
    min-width: 0;
    padding: 7px 16px 0 25px;
}

.schema-node {
    display: flex;
    align-items: center;
    margin-bottom: 24px;
}

.arrow {
    color: #8b8c92;
}

.node-box {
    width: 48px;
    height: 48px;
    display: flex;
    align-items: center;
    justify-content: center;
    margin: 0 18px 0 19px;
    border-radius: 6px;
    background: #fff;
    color: #5aa2ec;
    box-shadow: 0 0 3px #dcdde5;
}

.count {
    margin-left: auto;
    color: #929398;
}

.field {
    display: flex;
    align-items: flex-start;
    min-height: 64px;
    padding-left: 88px;
}

.field-parent {
    padding-left: 53px;
}

.field-parent .arrow {
    margin: 16px 18px 0 0;
}

.field-child {
    padding-left: 136px;
}

.pill {
    flex: none;
    height: 44px;
    display: flex;
    align-items: center;
    padding-left: 15px;
    border-radius: 6px;
    background: #fff;
    box-shadow: 0 0 3px #dcdde5;
}

.pill svg {
    color: #8b8c92;
}

.pill span {
    margin-left: 15px;
    padding: 0 12px;
    line-height: 36px;
    border-left: 2px solid #ebecf2;
}

.value {
    min-width: 0;
    padding: 14px 0 18px 18px;
    line-height: 24px;
    color: #77787d;
}

.newline {
    padding: 0 3px;
    color: #b0b1b6;
}

.tri {
    flex: none;
    border: 9px solid transparent;
    color: #8b8b8b;
}

.tri-up { border-bottom: 14px solid; border-top: 0; }
.tri-down { border-top: 14px solid; border-bottom: 0; }
.tri-left { border-right: 12px solid; border-left: 0; }
.tri-right { border-left: 12px solid; border-right: 0; }

.scrollbar {
    flex: 0 0 30px;
    display: flex;
    flex-direction: column;
    align-items: center;
    padding: 10px 0 9px;
    background: #fdfdfd;
}

.scrollbar::before,
.scrollbar::after {
    content: "";
}

.scrollbar .tri-up { order: -1; }
.scrollbar .tri-down { order: 1; }

.scrollbar b {
    width: 18px;
    border-radius: 9px;
    background: #8b8b8b;
}

.scrollbar-input::before { flex: 13; }
.scrollbar-input b { flex: 564; }
.scrollbar-input::after { flex: 369; }
.scrollbar-params::before { flex: 270; }
.scrollbar-params b { flex: 430; }
.scrollbar-params::after { flex: 257; }

/* parameters */
.param-tabs {
    flex: none;
    height: 80px;
    display: flex;
    border-bottom: 2px solid #dcdde5;
    padding-right: 31px;
}

.param-tabs button {
    padding: 0 32px 2px;
    font-weight: 600;
    color: #77787d;
}

.param-tabs .on {
    color: #ff6f5c;
    box-shadow: inset 0 -4px #ff6f5c;
}

.param-tabs .execute {
    align-self: center;
    gap: 15px;
    height: 52px;
    margin-left: auto;
    padding: 0 25px;
    border-radius: 8px;
    background: #ff6f5c;
    color: #fff;
}

.params {
    flex: 1;
    min-width: 0;
    padding: 0 39px 0 80px;
    margin-top: -97px;
}

.param {
    margin-bottom: 40px;
}

.param-box {
    border: 2px solid #dcdde5;
    border-radius: 8px;
}

.param-box input {
    display: block;
    width: 100%;
    height: 56px;
    padding: 0 16px;
}

.param-type {
    display: flex;
    align-items: center;
    height: 58px;
    padding: 0 18px 0 17px;
    border-top: 2px solid #dcdde5;
    color: #8b8c92;
}

.param-type select {
    flex: 1;
    margin-left: 17px;
    color: #444;
}

.expression {
    position: relative;
    display: flex;
    border-top: 2px solid #dcdde5;
}

.eq {
    flex: 0 0 44px;
    border-right: 2px solid #dcdde5;
    border-radius: 0 0 0 6px;
    background: #f1f3f9;
    line-height: 50px;
    text-align: center;
    font-size: 28px;
    color: #77787d;
}

.expression code {
    flex: 1;
    min-width: 0;
    padding: 8px 0 7px 15px;
    font-family: "DejaVu Sans Mono", monospace;
    font-size: 24px;
    line-height: 41px;
    word-break: break-all;
}

.expression mark {
    background: #d7f4e4;
    color: #2a9d6b;
}

.expand {
    position: absolute;
    right: 0;
    bottom: 0;
    width: 42px;
    height: 42px;
    border: 2px solid #dcdde5;
    border-width: 2px 0 0 2px;
    border-radius: 8px 0 0 0;
    background: #fff;
}

.result {
    font-family: "Liberation Mono", monospace;
    font-size: 20px;
    line-height: 36px;
    white-space: pre;
    overflow: hidden;
    color: #88898e;
}

.result em {
    font-family: "Noto Sans CJK SC", sans-serif;
    font-size: 24px;
    line-height: 20px;
    font-style: normal;
}

.drop-area {
    height: 116px;
    margin: 44px -8px 0 0;
    border: 2px dashed #c9cad2;
    border-radius: 12px;
    background: #fafbfe;
    line-height: 112px;
    text-align: center;
}

.drop-area a {
    color: #ff6f5c;
}

/* output */
.panel-output .panel-head {
    height: 65px;
    padding: 11px 13px 0 25px;
    align-items: flex-start;
    overflow: hidden;
}

.panel-output .panel-head > h2 {
    line-height: 60px;
    margin-right: 16px;
    flex: none;
}

.panel-output .panel-head > svg {
    margin: 14px 19px 0 0;
}

.panel-output .icon-button {
    margin-top: 16px;
}

.panel-output .switch {
    flex: none;
}

.edit-button {
    flex: none;
    width: 60px;
    height: 60px;
    margin-left: 16px;
    border: 2px solid #b4b6c0;
    border-radius: 8px;
    background: #fff;
}

.hscroll {
    flex: none;
    display: flex;
    align-items: center;
    gap: 7px;
    height: 20px;
    padding: 0 6px;
    background: #fdfdfd;
}

.hscroll .tri {
    border-top-width: 6px;
    border-bottom-width: 6px;
}

.hscroll b {
    flex: 0 1 696px;
    height: 12px;
    border-radius: 6px;
    background: #8b8b8b;
}

.hscroll .tri-right {
    margin-left: auto;
}

.output-count {
    padding: 17px 25px 0;
    line-height: 30px;
    color: #929398;
}

.schema-output {
    padding: 19px 24px 0 0;
}

.schema-output .field {
    padding-left: 67px;
}

/* floating pieces over the page */
.float-node {
    position: absolute;
    left: 8px;
    top: 591px;
    width: 80px;
    height: 80px;
    border: 2px solid #dcdde5;
    border-radius: 12px;
    background: #fff;
    color: #5aa2ec;
}

.toast {
    position: absolute;
    right: 30px;
    bottom: 33px;
    width: 660px;
    height: 104px;
    display: flex;
    align-items: center;
    padding: 0 36px 0 28px;
    border-radius: 8px;
    background: #fff;
    box-shadow: 0 4px 20px rgba(0, 0, 0, 0.15);
}

.toast strong {
    margin-left: 30px;
    padding-bottom: 8px;
    font-size: 32px;
    font-weight: 600;
}

.toast button {
    margin-left: auto;
    color: #929398;
}

/* taskbar */
.taskbar {
    flex: none;
    height: 93px;
    position: relative;
    display: grid;
    grid-template-columns: 1fr auto 1fr;
    align-items: center;
    background: linear-gradient(90deg, #d8e1ee 0%, #e6e4f0 14%, #f2e4e2 28%, #fae5e0 36%, #e6e0e4 50%, #cfdbe7 62%, #d6e2ea 78%, #e4e2e3 96%);
    border-top: 2px solid #c5c6cf;
    font-family: "Noto Sans", "Noto Sans CJK SC", sans-serif;
    color: #222;
}

.weather {
    display: flex;
    align-items: center;
    gap: 11px;
    padding: 0 0 4px 42px;
    font-size: 22px;
    line-height: 32px;
}

.weather span {
    color: #555;
}

.badge-text {
    font-size: 22px;
    fill: #fff;
}

.task-center {
    display: flex;
    align-items: center;
    gap: 12px;
    padding-left: 15px;
}

.task-search {
    width: 437px;
    height: 62px;
    display: flex;
    align-items: center;
    gap: 20px;
    margin: 0 0 0 17px;
    padding: 0 8px 0 20px;
    border: 2px solid #dcd8dd;
    border-radius: 31px;
    background: #faf6f8;
}

.task-search input {
    flex: 1;
    font-size: 28px;
}

.task-search input::placeholder {
    color: #555;
}

.app {
    position: relative;
    width: 76px;
    height: 78px;
    border-radius: 8px;
}

.current {
    background: #edf3f9;
}

.running::after {
    content: "";
    position: absolute;
    left: 32px;
    bottom: 1px;
    width: 12px;
    height: 6px;
    border-radius: 3px;
    background: #85888f;
}

.current::after {
    left: 22px;
    width: 32px;
    background: #0b6bcb;
}

.tray {
    display: flex;
    align-items: center;
    justify-content: flex-end;
    gap: 32px;
    padding-right: 40px;
}

.ime {
    font-size: 30px;
    line-height: 32px;
}

.tray time {
    font-size: 23px;
    line-height: 32px;
    text-align: right;
    margin: 0 -14px 0 2px;
}

.tray svg:nth-of-type(4) {
    margin: 0 -18px 0 -12px;
}

.watermark {
    position: absolute;
    right: 38px;
    top: 20px;
    font-size: 25px;
    line-height: 40px;
    color: #dcdcdc;
    text-shadow: 1px 1px 1px #444;
}

/* marks */
.mark, .mark-arrow, .note {
    position: absolute;
}

.mark {
    border: 8px solid #ff5064;
    border-radius: 8px;
}

.mark-title { left: 128px; top: 592px; width: 190px; height: 60px; }
.mark-link { left: 130px; top: 672px; width: 182px; height: 62px; }
.mark-date { left: 126px; top: 750px; width: 262px; height: 76px; }
.mark-content { left: 126px; top: 868px; width: 220px; height: 80px; }
.mark-block { left: 880px; top: 1091px; width: 804px; height: 277px; }
.mark-execute { left: 1370px; top: 342px; width: 384px; height: 122px; }
.mark-arrow { left: 404px; top: 746px; }

.note {
    font-family: "Noto Sans", "Noto Sans CJK SC", sans-serif;
    font-size: 42px;
    line-height: 56px;
    color: #ff5064;
}

.note-1 { left: 539px; top: 720px; }
.note-2 { left: 696px; top: 1264px; }
.note-3 { left: 1205px; top: 408px; }
```
